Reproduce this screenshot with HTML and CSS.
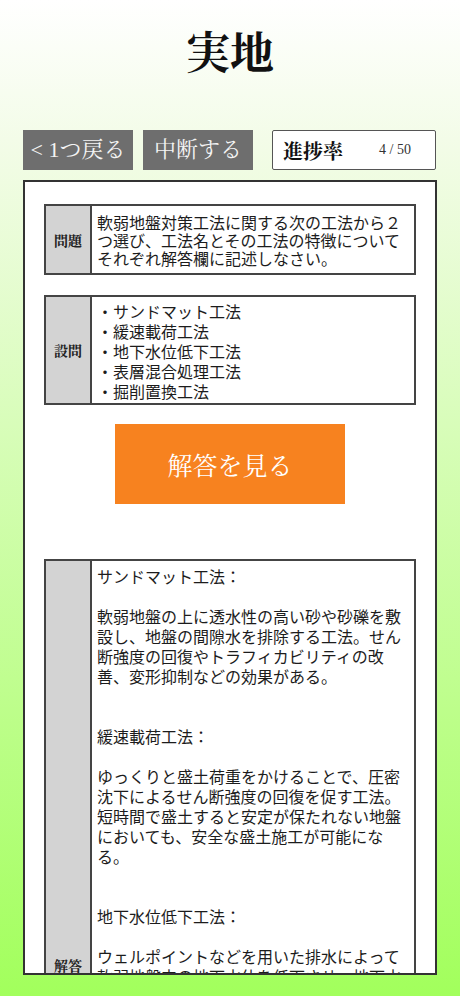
FILE: index.html
```html
<!DOCTYPE html>
<html lang="ja">
<head>
<meta charset="utf-8">
<title>実地</title>
<link rel="stylesheet" href="styles.css">
</head>
<body>
<div class="page">
  <h1 class="title">実地</h1>
  <div class="toolbar">
    <button class="tbtn">&lt; 1つ戻る</button>
    <button class="tbtn">中断する</button>
    <div class="progress">
      <span class="progress-label">進捗率</span>
      <span class="progress-num">4 / 50</span>
    </div>
  </div>
  <div class="sheet">
    <div class="qbox q1">
      <div class="qlabel">問題</div>
      <div class="qtext">軟弱地盤対策工法に関する次の工法から２つ選び、工法名とその工法の特徴についてそれぞれ解答欄に記述しなさい。</div>
    </div>
    <div class="qbox q2">
      <div class="qlabel">設問</div>
      <div class="qtext">・サンドマット工法<br>・緩速載荷工法<br>・地下水位低下工法<br>・表層混合処理工法<br>・掘削置換工法</div>
    </div>
    <button class="answer-btn">解答を見る</button>
    <div class="qbox q3">
      <div class="qlabel">解答</div>
      <div class="qtext">サンドマット工法：<br><br>軟弱地盤の上に透水性の高い砂や砂礫を敷設し、地盤の間隙水を排除する工法。せん断強度の回復やトラフィカビリティの改善、変形抑制などの効果がある。<br><br><br>緩速載荷工法：<br><br>ゆっくりと盛土荷重をかけることで、圧密沈下によるせん断強度の回復を促す工法。短時間で盛土すると安定が保たれない地盤においても、安全な盛土施工が可能になる。<br><br><br>地下水位低下工法：<br><br>ウェルポイントなどを用いた排水によって軟弱地盤中の地下水位を低下させ、地下水位以下の土の有効応力を増加させることで、圧密を促進し、地盤の強度を増加させる工法。<br><br><br>表層混合処理工法：<br><br>セメントや石灰などの固化材を軟弱地盤の表層部分に混合して改良し、地盤の強度を高める工法。トラフィカビリティの確保や、沈下の抑制などの効果がある。<br><br><br>掘削置換工法：<br><br>軟弱層の一部または全部を掘削し、良質な材料で置き換える工法。せん断抵抗が付与され、安全率の増加、沈下の低減などの効果がある。</div>
    </div>
  </div>
</div>
</body>
</html>
```
FILE: styles.css
```css
html, body {
  margin: 0;
  padding: 0;
}
body {
  width: 460px;
  height: 996px;
  overflow: hidden;
  background: linear-gradient(to bottom, #ffffff 0%, #f3fce8 14%, #a2ff5c 100%);
  font-family: "Noto Sans CJK JP", sans-serif;
  color: #1c1c1c;
}
.page {
  display: flex;
  flex-direction: column;
  align-items: center;
  padding-top: 25px;
}
.title {
  margin: 0;
  height: 60px;
  line-height: 60px;
  font-size: 44px;
  font-weight: bold;
  font-family: "Liberation Serif", "Noto Serif CJK JP", "Noto Sans CJK JP", serif;
  color: #111;
}
.toolbar {
  margin-top: 45px;
  width: 414px;
  height: 40px;
  display: flex;
  align-items: stretch;
}
.tbtn {
  width: 110px;
  margin: 0 10px 0 0;
  padding: 0;
  border: none;
  background: #6e6e6e;
  color: #f4f4f4;
  font-family: "Liberation Serif", "Noto Serif CJK JP", "Noto Sans CJK JP", serif;
  font-size: 22px;
  line-height: 40px;
}
.tbtn + .tbtn {
  margin-right: 19px;
}
.progress {
  width: 164px;
  box-sizing: border-box;
  border: 1px solid #555;
  border-radius: 2px;
  background: #fff;
  display: flex;
  align-items: center;
  padding-left: 10px;
}
.progress-label {
  font-family: "Liberation Serif", "Noto Serif CJK JP", "Noto Sans CJK JP", serif;
  font-weight: bold;
  font-size: 20px;
  color: #111;
}
.progress-num {
  margin-left: 36px;
  font-family: "Liberation Serif", serif;
  font-size: 14px;
  color: #333;
}
.sheet {
  margin-top: 10px;
  width: 414px;
  height: 795px;
  box-sizing: border-box;
  border: 2px solid #333;
  background: #fff;
  overflow: hidden;
  padding: 22px 19px 0;
  display: flex;
  flex-direction: column;
  align-items: stretch;
}
.qbox {
  display: flex;
  flex: none;
  border: 2px solid #444;
  background: #fff;
}
.qlabel {
  width: 44px;
  flex: none;
  background: #d3d3d3;
  border-right: 2px solid #444;
  display: flex;
  align-items: center;
  justify-content: center;
  font-family: "Liberation Serif", "Noto Serif CJK JP", "Noto Sans CJK JP", serif;
  font-weight: bold;
  font-size: 14px;
  color: #222;
}
.qtext {
  flex: 1;
  padding: 4px 4px 2px 5px;
  font-size: 16px;
  line-height: 20px;
}
.q1 .qtext {
  padding: 7px 4px 6px 5px;
  line-height: 18px;
}
.q2 {
  margin-top: 20px;
}
.q3 {
  margin-top: 55px;
}
.q3 .qtext {
  padding-top: 5px;
  padding-bottom: 2px;
  line-height: 20px;
}
.answer-btn {
  flex: none;
  align-self: center;
  margin-top: 19px;
  width: 230px;
  height: 80px;
  border: none;
  padding: 0;
  background: #f7821f;
  color: #fff;
  font-family: "Liberation Serif", "Noto Serif CJK JP", "Noto Sans CJK JP", serif;
  font-size: 25px;
}
```
